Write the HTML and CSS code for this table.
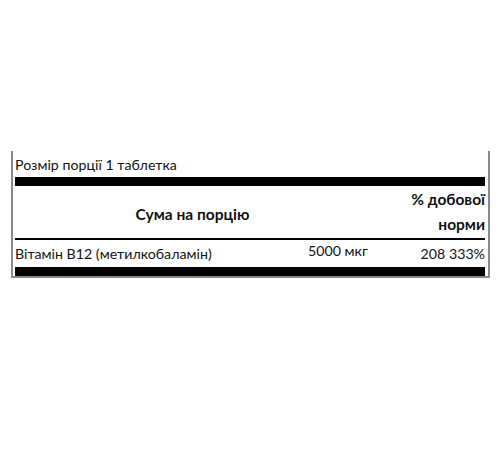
FILE: index.html
```html
<!DOCTYPE html>
<html lang="uk">
<head>
<meta charset="utf-8">
<title>Поживна цінність</title>
<link rel="stylesheet" href="styles.css">
</head>
<body>
<div class="facts">
  <div class="serving">Розмір порції 1 таблетка</div>
  <div class="bar"></div>
  <div class="head">
    <div class="head-amount">Сума на порцію</div>
    <div class="head-dv">% добової<br>норми</div>
  </div>
  <div class="rule"></div>
  <div class="row">
    <div class="name">Вітамін B12 (метилкобаламін)</div>
    <div class="value">5000 мкг</div>
    <div class="dv">208 333%</div>
  </div>
  <div class="bar bar-bottom"></div>
</div>
</body>
</html>
```
FILE: styles.css
```css
html, body {
  background: #ffffff;
}
body {
  margin: 8px;
  font-family: Lato, "Open Sans", sans-serif;
  font-size: 14px;
  color: #111111;
}
.facts {
  margin: 143px 0 0 3px;
  width: 470px;
  padding: 0 3px 0 2px;
  border-left: 2px solid #8a8a8a;
  border-right: 2px solid #8a8a8a;
  border-bottom: 2px solid #8a8a8a;
}
.serving {
  height: 26px;
  line-height: 20px;
  padding-top: 4px;
  box-sizing: border-box;
  font-size: 14.2px;
}
.bar {
  height: 9px;
  background: #000;
}
.bar-bottom {
  height: 9px;
}
.head {
  display: grid;
  grid-template-columns: 1fr 115px;
  height: 52px;
  padding-top: 1px;
  box-sizing: border-box;
  font-weight: bold;
  font-size: 15.5px;
}
.head-amount {
  display: flex;
  align-items: center;
  justify-content: center;
  padding-top: 2px;
}
.head-dv {
  text-align: right;
  line-height: 25px;
}
.rule {
  height: 2px;
  background: #000;
}
.row {
  display: grid;
  grid-template-columns: 1fr 115px 115px;
  height: 27px;
  align-items: end;
  padding-bottom: 3px;
  box-sizing: border-box;
  font-size: 14.2px;
}
.name {
  line-height: 20px;
}
.value {
  line-height: 20px;
  padding-bottom: 3px;
  padding-left: 53px;
  white-space: nowrap;
}
.dv {
  text-align: right;
  line-height: 20px;
}
```
